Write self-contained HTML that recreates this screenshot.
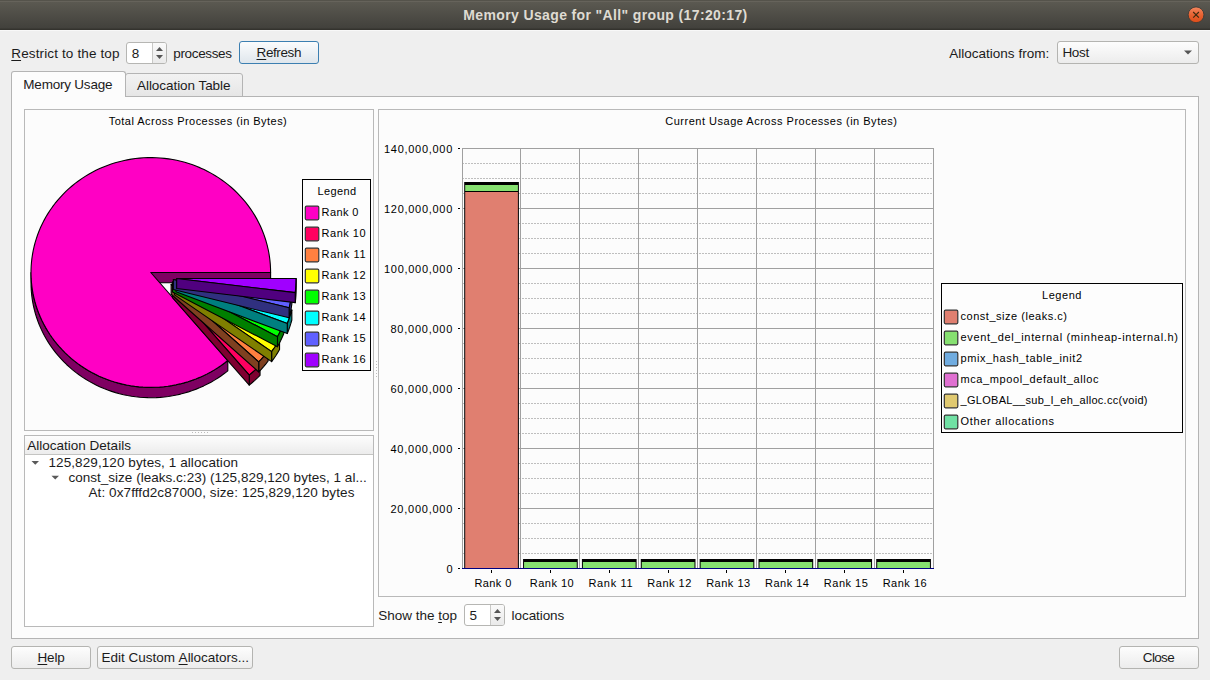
<!DOCTYPE html>
<html>
<head>
<meta charset="utf-8">
<title>Memory Usage for "All" group (17:20:17)</title>
<style>
html,body{margin:0;padding:0;}
body{width:1210px;height:680px;overflow:hidden;background:#efefef;position:relative;font-family:"Liberation Sans",sans-serif;color:#1a1a1a;}
.abs{position:absolute;box-sizing:border-box;}
.t{position:absolute;white-space:pre;line-height:1em;font-family:"Liberation Sans",sans-serif;color:#1b1b1b;}
.t u{text-decoration:underline;text-underline-offset:1.5px;text-decoration-thickness:1px;}
#titlebar{left:0;top:0;width:1210px;height:30px;background:linear-gradient(#66635b 0px,#66635b 1px,#5b5951 1px,#42413c 27px,#34332e 28px,#34332e 29px);border-top:1px solid #55534b;}
.btn{border:1px solid #b4b4b1;border-radius:3px;background:linear-gradient(#fdfdfd,#ececec);}
.btn.focus{border-color:#3c7fb1;background:linear-gradient(#fbfcfd,#dfe6ec);}
.field{border:1px solid #b6b6b3;border-radius:3px;background:#fff;}
.frame{border:1px solid #b9b9b9;background:#fcfcfc;}
#pane{left:11px;top:96px;width:1188px;height:543px;border:1px solid #b4b4b4;background:#fcfcfc;}
.tab{border:1px solid #b4b4b4;border-bottom:none;border-radius:3px 3px 0 0;}
svg text{font-family:"Liberation Sans",sans-serif;fill:#000;}
</style>
</head>
<body>
<div id="titlebar" class="abs"></div>
<div class="abs" style="left:0;top:30px;width:1210px;height:1px;background:#f8f8f8;"></div>
<svg class="abs" style="left:1184px;top:2px" width="26" height="26" viewBox="1184 2 26 26"><defs><linearGradient id="cg" x1="0" y1="0" x2="0" y2="1"><stop offset="0" stop-color="#f3875f"/><stop offset="0.55" stop-color="#e6602f"/><stop offset="1" stop-color="#dc4c18"/></linearGradient></defs><circle cx="1196.05" cy="14.8" r="7.9" fill="url(#cg)" stroke="#3a3b37" stroke-width="0.9"/><path d="M1193.2 12 L1198.9 17.6 M1198.9 12 L1193.2 17.6" stroke="#3a2a10" stroke-width="1.1" fill="none"/></svg>

<!-- top row -->
<div class="abs field" style="left:126px;top:42px;width:41px;height:22px;"></div>
<div class="abs" style="left:152px;top:43px;width:14px;height:20px;border-left:1px solid #c8c8c6;background:linear-gradient(#fafafa,#eaeaea);border-radius:0 2px 2px 0;"></div>
<svg class="abs" style="left:153px;top:43px" width="13" height="20" viewBox="0 0 13 20"><path d="M3 8 L6.5 4 L10 8 Z M3 12 L6.5 16 L10 12 Z" fill="#555"/></svg>
<div class="abs btn focus" style="left:239px;top:41px;width:80px;height:23px;"></div>
<div class="abs btn" style="left:1057px;top:41px;width:142px;height:23px;"></div>
<svg class="abs" style="left:1182px;top:48px" width="12" height="8" viewBox="0 0 12 8"><path d="M2 2.5 L10 2.5 L6 6.5 Z" fill="#555"/></svg>

<!-- tabs + pane -->
<div id="pane" class="abs"></div>
<div class="abs tab" style="left:125px;top:73px;width:118px;height:24px;background:linear-gradient(#f2f2f2,#e6e6e6);border-bottom:1px solid #b4b4b4;"></div>
<div class="abs tab" style="left:11px;top:71px;width:115px;height:26px;background:#fcfcfc;"></div>

<!-- frames -->
<div class="abs frame" style="left:24px;top:109px;width:350px;height:322px;"></div>
<div class="abs frame" style="left:24px;top:435px;width:350px;height:192px;background:#fff;"></div>
<div class="abs" style="left:25px;top:436px;width:348px;height:19px;background:linear-gradient(#fdfdfd,#ececec);border-bottom:1px solid #c4c4c2;"></div>
<div class="abs frame" style="left:378px;top:109px;width:808px;height:488px;"></div>
<svg class="abs" style="left:25px;top:455px" width="60" height="40" viewBox="0 0 60 40"><path d="M6.5 6 L14 6 L10.25 9.8 Z M26.5 20.8 L34 20.8 L30.25 24.6 Z" fill="#5a5a5a"/></svg>

<svg class="abs" style="left:0;top:0;pointer-events:none" width="1210" height="680" viewBox="0 0 1210 680"><rect x="192" y="432" width="1" height="1" fill="#bdbdbd"/><rect x="195" y="432" width="1" height="1" fill="#bdbdbd"/><rect x="198" y="432" width="1" height="1" fill="#bdbdbd"/><rect x="201" y="432" width="1" height="1" fill="#bdbdbd"/><rect x="204" y="432" width="1" height="1" fill="#bdbdbd"/><rect x="207" y="432" width="1" height="1" fill="#bdbdbd"/><rect x="376" y="361" width="1" height="1" fill="#bdbdbd"/><rect x="376" y="364" width="1" height="1" fill="#bdbdbd"/><rect x="376" y="367" width="1" height="1" fill="#bdbdbd"/><rect x="376" y="370" width="1" height="1" fill="#bdbdbd"/><rect x="376" y="373" width="1" height="1" fill="#bdbdbd"/><rect x="376" y="376" width="1" height="1" fill="#bdbdbd"/></svg>
<!-- bottom spin -->
<div class="abs field" style="left:464px;top:604px;width:41px;height:22px;"></div>
<div class="abs" style="left:490px;top:605px;width:14px;height:20px;border-left:1px solid #c8c8c6;background:linear-gradient(#fafafa,#eaeaea);border-radius:0 2px 2px 0;"></div>
<svg class="abs" style="left:491px;top:605px" width="13" height="20" viewBox="0 0 13 20"><path d="M3 8 L6.5 4 L10 8 Z M3 12 L6.5 16 L10 12 Z" fill="#555"/></svg>

<!-- bottom buttons -->
<div class="abs btn" style="left:11px;top:646px;width:80px;height:23px;"></div>
<div class="abs btn" style="left:97px;top:646px;width:156px;height:23px;"></div>
<div class="abs btn" style="left:1119px;top:646px;width:80px;height:23px;"></div>

<!-- charts -->
<svg class="abs" style="left:0;top:0" width="1210" height="680" viewBox="0 0 1210 680">
<g stroke="#000" stroke-width="1.1" stroke-linejoin="round"><path d="M31.00,272.50 L31.07,276.45 L31.28,280.39 L31.64,284.33 L32.13,288.25 L32.77,292.15 L33.54,296.03 L34.45,299.88 L35.50,303.70 L36.69,307.49 L38.01,311.23 L39.46,314.92 L41.05,318.57 L42.77,322.16 L44.61,325.69 L46.58,329.16 L48.67,332.56 L50.88,335.89 L53.21,339.15 L55.66,342.33 L58.22,345.42 L60.89,348.43 L63.66,351.35 L66.54,354.18 L69.51,356.90 L72.59,359.53 L75.75,362.06 L79.01,364.48 L82.35,366.79 L85.76,369.00 L89.26,371.08 L92.83,373.05 L96.47,374.90 L100.17,376.63 L103.93,378.24 L107.75,379.72 L111.62,381.08 L115.53,382.31 L119.49,383.41 L123.48,384.37 L127.51,385.21 L131.56,385.91 L135.63,386.48 L139.73,386.91 L143.83,387.21 L147.95,387.37 L152.07,387.39 L156.18,387.28 L160.29,387.04 L164.39,386.66 L168.48,386.14 L172.54,385.49 L176.57,384.71 L180.58,383.79 L184.55,382.75 L188.48,381.57 L192.37,380.26 L196.21,378.83 L199.99,377.27 L203.72,375.58 L207.38,373.78 L210.97,371.85 L214.50,369.81 L217.95,367.65 L221.32,365.38 L224.61,363.01 L227.81,360.52 L227.81,370.82 L224.61,373.31 L221.32,375.68 L217.95,377.95 L214.50,380.11 L210.97,382.15 L207.38,384.08 L203.72,385.88 L199.99,387.57 L196.21,389.13 L192.37,390.56 L188.48,391.87 L184.55,393.05 L180.58,394.09 L176.57,395.01 L172.54,395.79 L168.48,396.44 L164.39,396.96 L160.29,397.34 L156.18,397.58 L152.07,397.69 L147.95,397.67 L143.83,397.51 L139.73,397.21 L135.63,396.78 L131.56,396.21 L127.51,395.51 L123.48,394.67 L119.49,393.71 L115.53,392.61 L111.62,391.38 L107.75,390.02 L103.93,388.54 L100.17,386.93 L96.47,385.20 L92.83,383.35 L89.26,381.38 L85.76,379.30 L82.35,377.09 L79.01,374.78 L75.75,372.36 L72.59,369.83 L69.51,367.20 L66.54,364.48 L63.66,361.65 L60.89,358.73 L58.22,355.72 L55.66,352.63 L53.21,349.45 L50.88,346.19 L48.67,342.86 L46.58,339.46 L44.61,335.99 L42.77,332.46 L41.05,328.87 L39.46,325.22 L38.01,321.53 L36.69,317.79 L35.50,314.00 L34.45,310.18 L33.54,306.33 L32.77,302.45 L32.13,298.55 L31.64,294.63 L31.28,290.69 L31.07,286.75 L31.00,282.80 Z" fill="#7f0062"/><path d="M150.80,272.50 L270.60,272.50 L270.60,282.80 L150.80,282.80 Z" fill="#7f0062"/><path d="M150.80,272.50 L270.60,272.50 L270.53,268.52 L270.31,264.54 L269.95,260.57 L269.45,256.61 L268.80,252.67 L268.02,248.76 L267.09,244.88 L266.02,241.03 L264.81,237.21 L263.47,233.44 L261.99,229.72 L260.37,226.05 L258.63,222.43 L256.75,218.88 L254.75,215.38 L252.62,211.96 L250.37,208.61 L248.00,205.34 L245.52,202.15 L242.92,199.04 L240.20,196.02 L237.39,193.09 L234.46,190.26 L231.44,187.53 L228.32,184.90 L225.10,182.37 L221.80,179.95 L218.41,177.65 L214.94,175.46 L211.40,173.38 L207.78,171.43 L204.09,169.59 L200.33,167.88 L196.52,166.30 L192.65,164.84 L188.74,163.51 L184.77,162.32 L180.77,161.25 L176.73,160.32 L172.66,159.53 L168.56,158.87 L164.44,158.35 L160.31,157.96 L156.16,157.72 L152.01,157.61 L147.85,157.63 L143.70,157.80 L139.56,158.11 L135.43,158.55 L131.32,159.13 L127.23,159.85 L123.17,160.70 L119.15,161.68 L115.16,162.80 L111.21,164.05 L107.32,165.44 L103.47,166.95 L99.68,168.58 L95.96,170.35 L92.30,172.23 L88.71,174.24 L85.19,176.36 L81.76,178.60 L78.40,180.95 L75.14,183.42 L71.96,185.99 L68.88,188.66 L65.90,191.44 L63.02,194.31 L60.25,197.27 L57.58,200.33 L55.03,203.47 L52.59,206.70 L50.27,210.01 L48.07,213.39 L45.99,216.84 L44.05,220.36 L42.22,223.94 L40.53,227.58 L38.98,231.28 L37.55,235.02 L36.27,238.81 L35.12,242.64 L34.11,246.50 L33.24,250.40 L32.51,254.32 L31.92,258.27 L31.48,262.23 L31.18,266.20 L31.02,270.19 L31.01,274.17 L31.15,278.15 L31.42,282.13 L31.84,286.09 L32.40,290.04 L33.11,293.97 L33.96,297.87 L34.94,301.74 L36.07,305.58 L37.34,309.37 L38.74,313.12 L40.27,316.83 L41.94,320.48 L43.74,324.07 L45.67,327.60 L47.73,331.06 L49.91,334.45 L52.21,337.77 L54.63,341.01 L57.16,344.17 L59.81,347.24 L62.56,350.22 L65.43,353.11 L68.39,355.90 L71.46,358.59 L74.62,361.18 L77.87,363.66 L81.21,366.03 L84.63,368.29 L88.14,370.43 L91.71,372.45 L95.36,374.36 L99.08,376.14 L102.86,377.80 L106.69,379.33 L110.58,380.73 L114.52,382.00 L118.50,383.15 L122.52,384.15 L126.57,385.03 L130.66,385.76 L134.76,386.37 L138.89,386.83 L143.03,387.16 L147.18,387.35 L151.34,387.40 L155.49,387.31 L159.64,387.09 L163.78,386.72 L167.90,386.22 L172.00,385.59 L176.07,384.81 L180.12,383.91 L184.13,382.86 L188.10,381.69 L192.03,380.38 L195.90,378.95 L199.72,377.38 L203.49,375.69 L207.18,373.88 L210.82,371.94 L214.38,369.89 L217.86,367.71 L221.26,365.43 L224.58,363.03 L227.81,360.52 Z" fill="#ff00c4"/><path d="M172.44,287.53 L249.26,375.08 L252.07,372.75 L254.81,370.34 L257.47,367.84 L260.04,365.27 Z" fill="#ff0060"/><path d="M249.26,375.08 L252.07,372.75 L254.81,370.34 L257.47,367.84 L260.04,365.27 L260.04,375.27 L257.47,377.84 L254.81,380.34 L252.07,382.75 L249.26,385.08 Z" fill="#7f0030"/><path d="M172.44,287.53 L249.26,375.08 L249.26,385.08 L172.44,297.53 Z" fill="#7f0030"/><path d="M171.13,284.25 L258.73,361.99 L261.22,359.34 L263.62,356.62 L265.93,353.83 L268.15,350.97 Z" fill="#ff8040"/><path d="M258.73,361.99 L261.22,359.34 L263.62,356.62 L265.93,353.83 L268.15,350.97 L268.15,360.97 L265.93,363.83 L263.62,366.62 L261.22,369.34 L258.73,371.99 Z" fill="#7f4020"/><path d="M171.13,284.25 L258.73,361.99 L258.73,371.99 L171.13,294.25 Z" fill="#7f4020"/><path d="M174.60,284.89 L271.63,351.61 L273.75,348.69 L275.78,345.70 L277.72,342.65 L279.55,339.55 Z" fill="#ffff00"/><path d="M271.63,351.61 L273.75,348.69 L275.78,345.70 L277.72,342.65 L279.55,339.55 L279.55,349.55 L277.72,352.65 L275.78,355.70 L273.75,358.69 L271.63,361.61 Z" fill="#7f7f00"/><path d="M174.60,284.89 L271.63,351.61 L271.63,361.61 L174.60,294.89 Z" fill="#7f7f00"/><path d="M172.52,282.04 L277.46,336.70 L279.19,333.55 L280.82,330.34 L282.34,327.09 L283.76,323.80 Z" fill="#00ff00"/><path d="M277.46,336.70 L279.19,333.55 L280.82,330.34 L282.34,327.09 L283.76,323.80 L283.76,333.80 L282.34,337.09 L280.82,340.34 L279.19,343.55 L277.46,346.70 Z" fill="#007f00"/><path d="M172.52,282.04 L277.46,336.70 L277.46,346.70 L172.52,292.04 Z" fill="#007f00"/><path d="M176.04,281.80 L287.28,323.56 L288.59,320.22 L289.78,316.85 L290.87,313.44 L291.84,310.01 Z" fill="#00ffff"/><path d="M287.28,323.56 L288.59,320.22 L289.78,316.85 L290.87,313.44 L291.84,310.01 L291.84,320.01 L290.87,323.44 L289.78,326.85 L288.59,330.22 L287.28,333.56 Z" fill="#007f7f"/><path d="M176.04,281.80 L287.28,323.56 L287.28,333.56 L176.04,291.80 Z" fill="#007f7f"/><path d="M173.32,279.55 L289.12,307.76 L289.98,304.29 L290.73,300.80 L291.37,297.29 L291.89,293.76 Z" fill="#6060ff"/><path d="M289.12,307.76 L289.98,304.29 L290.73,300.80 L291.37,297.29 L291.89,293.76 L291.89,303.76 L291.37,307.29 L290.73,310.80 L289.98,314.29 L289.12,317.76 Z" fill="#30307f"/><path d="M173.32,279.55 L289.12,307.76 L289.12,317.76 L173.32,289.55 Z" fill="#30307f"/><path d="M176.67,278.45 L295.25,292.67 L295.65,289.12 L295.94,285.57 L296.12,282.02 L296.17,278.45 Z" fill="#a000ff"/><path d="M295.25,292.67 L295.65,289.12 L295.94,285.57 L296.12,282.02 L296.17,278.45 L296.17,288.45 L296.12,292.02 L295.94,295.57 L295.65,299.12 L295.25,302.67 Z" fill="#50007f"/><path d="M176.67,278.45 L295.25,292.67 L295.25,302.67 L176.67,288.45 Z" fill="#50007f"/></g>
<rect x="302.5" y="179.5" width="68" height="191" fill="#fdfdfd" stroke="#000"/><rect x="305.3" y="206.2" width="13.5" height="13.6" rx="1.2" fill="#ff00c4" stroke="#333" stroke-width="1.2"/><rect x="305.3" y="227.2" width="13.5" height="13.6" rx="1.2" fill="#ff0060" stroke="#333" stroke-width="1.2"/><rect x="305.3" y="248.2" width="13.5" height="13.6" rx="1.2" fill="#ff8040" stroke="#333" stroke-width="1.2"/><rect x="305.3" y="269.2" width="13.5" height="13.6" rx="1.2" fill="#ffff00" stroke="#333" stroke-width="1.2"/><rect x="305.3" y="290.2" width="13.5" height="13.6" rx="1.2" fill="#00ff00" stroke="#333" stroke-width="1.2"/><rect x="305.3" y="311.2" width="13.5" height="13.6" rx="1.2" fill="#00ffff" stroke="#333" stroke-width="1.2"/><rect x="305.3" y="332.2" width="13.5" height="13.6" rx="1.2" fill="#6060ff" stroke="#333" stroke-width="1.2"/><rect x="305.3" y="353.2" width="13.5" height="13.6" rx="1.2" fill="#a000ff" stroke="#333" stroke-width="1.2"/>
<line x1="462" y1="553.5" x2="933" y2="553.5" stroke="#bebebe" stroke-width="1" stroke-dasharray="2 1"/><line x1="462" y1="538.5" x2="933" y2="538.5" stroke="#bebebe" stroke-width="1" stroke-dasharray="2 1"/><line x1="462" y1="523.5" x2="933" y2="523.5" stroke="#bebebe" stroke-width="1" stroke-dasharray="2 1"/><rect x="462" y="508" width="472" height="1" fill="#a0a0a0"/><line x1="462" y1="493.5" x2="933" y2="493.5" stroke="#bebebe" stroke-width="1" stroke-dasharray="2 1"/><line x1="462" y1="478.5" x2="933" y2="478.5" stroke="#bebebe" stroke-width="1" stroke-dasharray="2 1"/><line x1="462" y1="463.5" x2="933" y2="463.5" stroke="#bebebe" stroke-width="1" stroke-dasharray="2 1"/><rect x="462" y="448" width="472" height="1" fill="#a0a0a0"/><line x1="462" y1="433.5" x2="933" y2="433.5" stroke="#bebebe" stroke-width="1" stroke-dasharray="2 1"/><line x1="462" y1="418.5" x2="933" y2="418.5" stroke="#bebebe" stroke-width="1" stroke-dasharray="2 1"/><line x1="462" y1="403.5" x2="933" y2="403.5" stroke="#bebebe" stroke-width="1" stroke-dasharray="2 1"/><rect x="462" y="388" width="472" height="1" fill="#a0a0a0"/><line x1="462" y1="373.5" x2="933" y2="373.5" stroke="#bebebe" stroke-width="1" stroke-dasharray="2 1"/><line x1="462" y1="358.5" x2="933" y2="358.5" stroke="#bebebe" stroke-width="1" stroke-dasharray="2 1"/><line x1="462" y1="343.5" x2="933" y2="343.5" stroke="#bebebe" stroke-width="1" stroke-dasharray="2 1"/><rect x="462" y="328" width="472" height="1" fill="#a0a0a0"/><line x1="462" y1="313.5" x2="933" y2="313.5" stroke="#bebebe" stroke-width="1" stroke-dasharray="2 1"/><line x1="462" y1="298.5" x2="933" y2="298.5" stroke="#bebebe" stroke-width="1" stroke-dasharray="2 1"/><line x1="462" y1="283.5" x2="933" y2="283.5" stroke="#bebebe" stroke-width="1" stroke-dasharray="2 1"/><rect x="462" y="268" width="472" height="1" fill="#a0a0a0"/><line x1="462" y1="253.5" x2="933" y2="253.5" stroke="#bebebe" stroke-width="1" stroke-dasharray="2 1"/><line x1="462" y1="238.5" x2="933" y2="238.5" stroke="#bebebe" stroke-width="1" stroke-dasharray="2 1"/><line x1="462" y1="223.5" x2="933" y2="223.5" stroke="#bebebe" stroke-width="1" stroke-dasharray="2 1"/><rect x="462" y="208" width="472" height="1" fill="#a0a0a0"/><line x1="462" y1="193.5" x2="933" y2="193.5" stroke="#bebebe" stroke-width="1" stroke-dasharray="2 1"/><line x1="462" y1="178.5" x2="933" y2="178.5" stroke="#bebebe" stroke-width="1" stroke-dasharray="2 1"/><line x1="462" y1="163.5" x2="933" y2="163.5" stroke="#bebebe" stroke-width="1" stroke-dasharray="2 1"/><rect x="462" y="148" width="472" height="1" fill="#a0a0a0"/><rect x="462" y="148" width="1" height="421" fill="#a0a0a0"/><rect x="520" y="148" width="1" height="421" fill="#a0a0a0"/><rect x="579" y="148" width="1" height="421" fill="#a0a0a0"/><rect x="638" y="148" width="1" height="421" fill="#a0a0a0"/><rect x="697" y="148" width="1" height="421" fill="#a0a0a0"/><rect x="756" y="148" width="1" height="421" fill="#a0a0a0"/><rect x="815" y="148" width="1" height="421" fill="#a0a0a0"/><rect x="874" y="148" width="1" height="421" fill="#a0a0a0"/><rect x="933" y="148" width="1" height="421" fill="#a0a0a0"/><rect x="458" y="568" width="2" height="1" fill="#000"/><rect x="458" y="508" width="2" height="1" fill="#000"/><rect x="458" y="448" width="2" height="1" fill="#000"/><rect x="458" y="388" width="2" height="1" fill="#000"/><rect x="458" y="328" width="2" height="1" fill="#000"/><rect x="458" y="268" width="2" height="1" fill="#000"/><rect x="458" y="208" width="2" height="1" fill="#000"/><rect x="458" y="148" width="2" height="1" fill="#000"/><rect x="491" y="570" width="1" height="3" fill="#000"/><rect x="550" y="570" width="1" height="3" fill="#000"/><rect x="609" y="570" width="1" height="3" fill="#000"/><rect x="668" y="570" width="1" height="3" fill="#000"/><rect x="726" y="570" width="1" height="3" fill="#000"/><rect x="785" y="570" width="1" height="3" fill="#000"/><rect x="844" y="570" width="1" height="3" fill="#000"/><rect x="903" y="570" width="1" height="3" fill="#000"/><rect x="464.20" y="182" width="54.7" height="386" fill="#000"/><rect x="465.20" y="192" width="52.7" height="376" fill="#e07f70"/><rect x="465.20" y="185" width="52.7" height="6" fill="#86e070"/><rect x="523.06" y="559" width="54.7" height="9" fill="#000"/><rect x="524.06" y="562" width="52.7" height="6" fill="#86e070"/><rect x="581.92" y="559" width="54.7" height="9" fill="#000"/><rect x="582.92" y="562" width="52.7" height="6" fill="#86e070"/><rect x="640.78" y="559" width="54.7" height="9" fill="#000"/><rect x="641.78" y="562" width="52.7" height="6" fill="#86e070"/><rect x="699.64" y="559" width="54.7" height="9" fill="#000"/><rect x="700.64" y="562" width="52.7" height="6" fill="#86e070"/><rect x="758.50" y="559" width="54.7" height="9" fill="#000"/><rect x="759.50" y="562" width="52.7" height="6" fill="#86e070"/><rect x="817.36" y="559" width="54.7" height="9" fill="#000"/><rect x="818.36" y="562" width="52.7" height="6" fill="#86e070"/><rect x="876.22" y="559" width="54.7" height="9" fill="#000"/><rect x="877.22" y="562" width="52.7" height="6" fill="#86e070"/><rect x="462" y="568" width="472" height="1" fill="#000080"/>
<rect x="941.5" y="283.5" width="241" height="149" fill="#fdfdfd" stroke="#000"/><rect x="944.3" y="310.2" width="13.5" height="13.6" rx="1.2" fill="#e07f70" stroke="#333" stroke-width="1.2"/><rect x="944.3" y="331.2" width="13.5" height="13.6" rx="1.2" fill="#86e070" stroke="#333" stroke-width="1.2"/><rect x="944.3" y="352.2" width="13.5" height="13.6" rx="1.2" fill="#70ace0" stroke="#333" stroke-width="1.2"/><rect x="944.3" y="373.2" width="13.5" height="13.6" rx="1.2" fill="#e070d1" stroke="#333" stroke-width="1.2"/><rect x="944.3" y="394.2" width="13.5" height="13.6" rx="1.2" fill="#e0c970" stroke="#333" stroke-width="1.2"/><rect x="944.3" y="415.2" width="13.5" height="13.6" rx="1.2" fill="#70e0a4" stroke="#333" stroke-width="1.2"/>
<text x="108.80" y="125.00" font-size="11.0" letter-spacing="0.461">Total Across Processes (in Bytes)</text>
<text x="317.50" y="194.80" font-size="11.0" letter-spacing="0.396">Legend</text>
<text x="665.30" y="125.00" font-size="11.0" letter-spacing="0.504">Current Usage Across Processes (in Bytes)</text>
<text x="1042.00" y="299.00" font-size="11.0" letter-spacing="0.556">Legend</text>
<text x="321.60" y="215.60" font-size="11.0" letter-spacing="0.388">Rank 0</text>
<text x="321.60" y="236.60" font-size="11.0" letter-spacing="0.503">Rank 10</text>
<text x="321.60" y="257.60" font-size="11.0" letter-spacing="0.641">Rank 11</text>
<text x="321.60" y="278.60" font-size="11.0" letter-spacing="0.503">Rank 12</text>
<text x="321.60" y="299.60" font-size="11.0" letter-spacing="0.503">Rank 13</text>
<text x="321.60" y="320.60" font-size="11.0" letter-spacing="0.503">Rank 14</text>
<text x="321.60" y="341.60" font-size="11.0" letter-spacing="0.503">Rank 15</text>
<text x="321.60" y="362.60" font-size="11.0" letter-spacing="0.503">Rank 16</text>
<text x="446.50" y="572.80" font-size="11.0" letter-spacing="0.000">0</text>
<text x="390.50" y="512.80" font-size="11.0" letter-spacing="0.749">20,000,000</text>
<text x="390.50" y="452.80" font-size="11.0" letter-spacing="0.749">40,000,000</text>
<text x="390.50" y="392.80" font-size="11.0" letter-spacing="0.749">60,000,000</text>
<text x="390.50" y="332.80" font-size="11.0" letter-spacing="0.749">80,000,000</text>
<text x="384.00" y="272.80" font-size="11.0" letter-spacing="0.713">100,000,000</text>
<text x="384.00" y="212.80" font-size="11.0" letter-spacing="0.713">120,000,000</text>
<text x="384.00" y="152.80" font-size="11.0" letter-spacing="0.713">140,000,000</text>
<text x="474.50" y="586.70" font-size="11.0" letter-spacing="0.388">Rank 0</text>
<text x="529.72" y="586.70" font-size="11.0" letter-spacing="0.503">Rank 10</text>
<text x="588.54" y="586.70" font-size="11.0" letter-spacing="0.641">Rank 11</text>
<text x="647.36" y="586.70" font-size="11.0" letter-spacing="0.503">Rank 12</text>
<text x="706.18" y="586.70" font-size="11.0" letter-spacing="0.503">Rank 13</text>
<text x="765.00" y="586.70" font-size="11.0" letter-spacing="0.503">Rank 14</text>
<text x="823.82" y="586.70" font-size="11.0" letter-spacing="0.503">Rank 15</text>
<text x="882.64" y="586.70" font-size="11.0" letter-spacing="0.503">Rank 16</text>
<text x="960.50" y="320.00" font-size="11.0" letter-spacing="0.521">const_size (leaks.c)</text>
<text x="960.50" y="341.00" font-size="11.0" letter-spacing="0.687">event_del_internal (minheap-internal.h)</text>
<text x="960.50" y="362.00" font-size="11.0" letter-spacing="0.602">pmix_hash_table_init2</text>
<text x="960.50" y="383.00" font-size="11.0" letter-spacing="0.602">mca_mpool_default_alloc</text>
<text x="960.50" y="404.00" font-size="11.0" letter-spacing="0.292">_GLOBAL__sub_I_eh_alloc.cc(void)</text>
<text x="960.50" y="425.00" font-size="11.0" letter-spacing="0.685">Other allocations</text>
</svg>

<span class="t" style="left:463.30px;top:8.25px;font-size:14.0px;letter-spacing:0.366px;font-weight:bold;color:#dfdbd2;">Memory Usage for &quot;All&quot; group (17:20:17)</span>
<span class="t" style="left:11.30px;top:47.37px;font-size:13.5px;letter-spacing:0.133px;"><u style="letter-spacing:0;margin-right:0.133px">R</u>estrict to the top</span>
<span class="t" style="left:131.80px;top:47.37px;font-size:13.5px;letter-spacing:0.000px;">8</span>
<span class="t" style="left:173.30px;top:47.37px;font-size:13.5px;letter-spacing:-0.354px;">processes</span>
<span class="t" style="left:256.50px;top:46.37px;font-size:13.5px;letter-spacing:-0.380px;"><u style="letter-spacing:0;margin-right:-0.380px">R</u>efresh</span>
<span class="t" style="left:949.20px;top:47.07px;font-size:13.5px;letter-spacing:0.013px;">Allocations from:</span>
<span class="t" style="left:1062.40px;top:45.87px;font-size:13.5px;letter-spacing:-0.322px;">Host</span>
<span class="t" style="left:23.30px;top:77.97px;font-size:13.5px;letter-spacing:-0.212px;">Memory Usage</span>
<span class="t" style="left:137.00px;top:78.97px;font-size:13.5px;letter-spacing:-0.055px;">Allocation Table</span>
<span class="t" style="left:27.30px;top:439.27px;font-size:13.5px;letter-spacing:0.002px;">Allocation Details</span>
<span class="t" style="left:48.50px;top:456.17px;font-size:13.5px;letter-spacing:0.087px;">125,829,120 bytes, 1 allocation</span>
<span class="t" style="left:68.40px;top:470.87px;font-size:13.5px;letter-spacing:0.023px;">const_size (leaks.c:23) (125,829,120 bytes, 1 al...</span>
<span class="t" style="left:88.50px;top:485.57px;font-size:13.5px;letter-spacing:0.088px;">At: 0x7fffd2c87000, size: 125,829,120 bytes</span>
<span class="t" style="left:378.30px;top:609.37px;font-size:13.5px;letter-spacing:-0.019px;">Show the <u style="letter-spacing:0;margin-right:-0.019px">t</u>op</span>
<span class="t" style="left:469.60px;top:609.37px;font-size:13.5px;letter-spacing:0.000px;">5</span>
<span class="t" style="left:511.60px;top:609.37px;font-size:13.5px;letter-spacing:-0.075px;">locations</span>
<span class="t" style="left:37.50px;top:651.27px;font-size:13.5px;letter-spacing:-0.189px;"><u style="letter-spacing:0;margin-right:-0.189px">H</u>elp</span>
<span class="t" style="left:101.50px;top:651.27px;font-size:13.5px;letter-spacing:-0.015px;">Edit Custom <u style="letter-spacing:0;margin-right:-0.015px">A</u>llocators...</span>
<span class="t" style="left:1142.80px;top:651.27px;font-size:13.5px;letter-spacing:-0.654px;">Close</span>
</body>
</html>
